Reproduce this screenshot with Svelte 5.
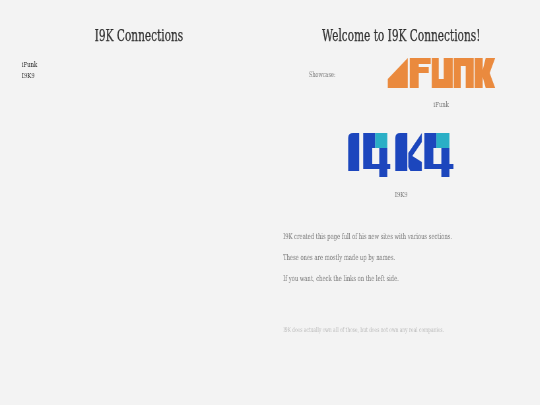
<script>
  const links = ['iFunk', 'I9K9'];
</script>

<div class="page">
  <aside class="side">
    <h1>I9K Connections</h1>
    <nav class="links">
      {#each links as link}
        <span>{link}</span>
      {/each}
    </nav>
  </aside>
  <main class="main">
    <h1>Welcome to I9K Connections!</h1>
    <div class="showcase">
      <span class="label">Showcase:</span>
      <figure>
        <svg class="funk" viewBox="386 57 109 32" preserveAspectRatio="none" aria-hidden="true">
          <path fill="#ea8a3e" d="M387 88 V79 L407 58 V88 Z M409 58 H430 V64 H418 V67 H428 V73 H418 V88 H409 Z M431 58 H438 V79 H443 V58 H452 V88 H431 Z M453 58 H473 V88 H465 V66 H460 V88 H453 Z M474 58 H482 V70 L485 58 H494.5 L489 73 L494.5 88 H485 L482 77 V88 H474 Z"/>
        </svg>
        <figcaption>iFunk</figcaption>
      </figure>
    </div>
    <figure class="second">
      <svg class="i9k" viewBox="347 131 108 47" preserveAspectRatio="none" aria-hidden="true">
        <path fill="#1c46bd" d="M353 132 H359 V170 H348 V137 Q348 132 353 132 Z M363 132 H375 V147 H372 V163 H379 V147 H387 V163 H390 V168 H387 V176 H379 V168 H363 Z M400 132 H407 V170 H395 V137 Q395 132 400 132 Z M408 152 L421.5 132 V141 L412 155 L421.5 161 V170 H410 L408 166 Z M424 132 H436 V147 H433 V163 H441 V147 H449 V163 H453 V168 H449 V176 H441 V168 H424 Z"/>
        <rect fill="#2aafc6" x="375" y="132" width="12" height="15"/>
        <rect fill="#2aafc6" x="436" y="132" width="13" height="15"/>
      </svg>
      <figcaption>I9K9</figcaption>
    </figure>
    <div class="copy">
      <p>I9K created this page full of his new sites with various sections.</p>
      <p>These ones are mostly made up by names.</p>
      <p>If you want, check the links on the left side.</p>
    </div>
    <p class="note">I9K does actually own all of those, but does not own any real companies.</p>
  </main>
</div>

<style>
  :global(body) {
    margin: 0;
    background: #f3f3f3;
  }
  .page {
    display: grid;
    grid-template-columns: 421px 397px;
    width: 818px;
    height: 405px;
    font-family: "DejaVu Serif", serif;
    transform: scaleX(0.66);
    transform-origin: 0 0;
    will-change: transform;
  }
  h1 {
    margin: 0;
    font-size: 16px;
    line-height: 20px;
    font-weight: 400;
    color: #2e2e2e;
    text-align: center;
    -webkit-text-stroke: 0.25px #2e2e2e;
  }
  .side {
    padding-top: 26px;
  }
  .links {
    display: flex;
    flex-direction: column;
    margin: 13px 0 0 33px;
    font-size: 8px;
    line-height: 11px;
    color: #222;
  }
  .main {
    padding: 26px 31px 0 8px;
    display: flex;
    flex-direction: column;
  }
  .showcase {
    display: grid;
    grid-template-columns: 118px 165px;
    margin: 11px 0 0 39px;
    font-size: 7.5px;
    color: #777;
  }
  .label {
    margin-top: 12px;
    line-height: 11px;
  }
  figure {
    margin: 0;
    display: flex;
    flex-direction: column;
    align-items: center;
    font-size: 8px;
    color: #777;
  }
  figcaption {
    line-height: 10px;
  }
  .funk {
    width: 165px;
    height: 32px;
    margin-bottom: 11px;
  }
  .second {
    margin-top: 22px;
  }
  .i9k {
    width: 164px;
    height: 47px;
    margin-bottom: 11px;
  }
  .copy {
    margin-top: 31px;
    font-size: 7.9px;
    color: #777;
  }
  .copy p {
    margin: 0 0 10px;
    line-height: 11px;
  }
  .note {
    margin: 31px 0 0;
    font-size: 6.6px;
    line-height: 10px;
    color: #bbb;
  }
</style>
